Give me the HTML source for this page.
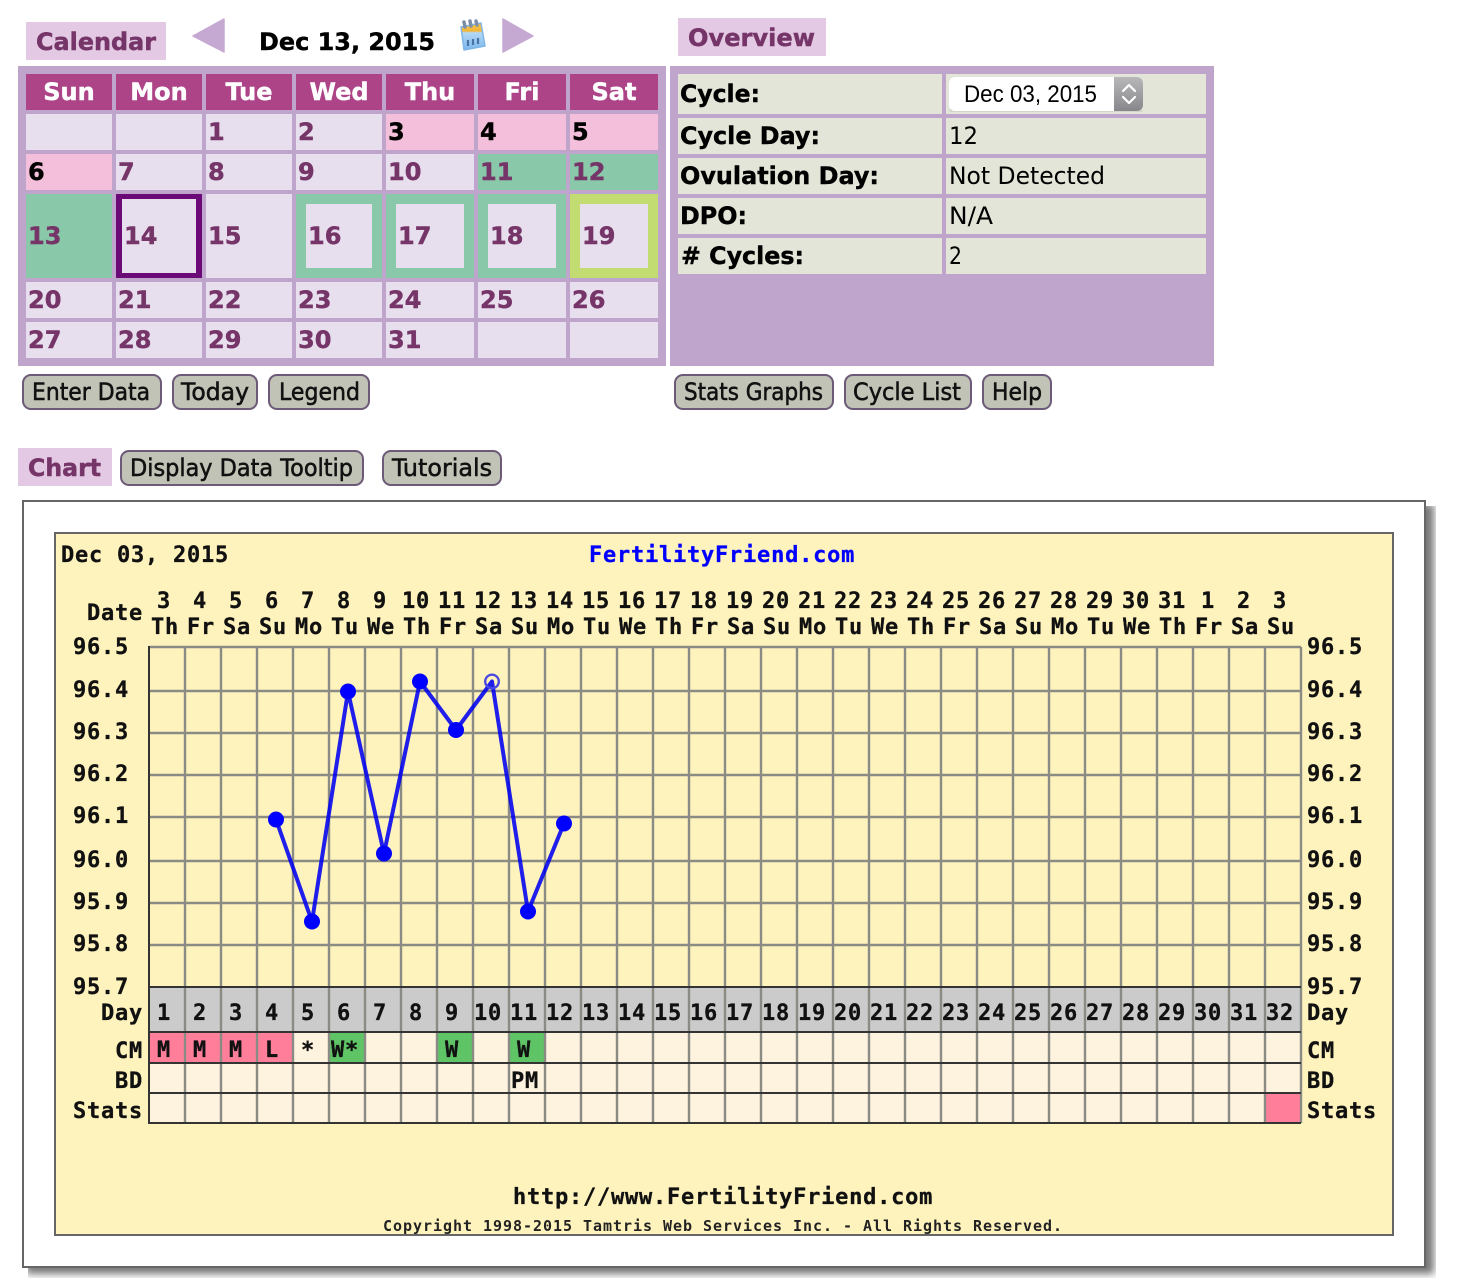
<!DOCTYPE html>
<html lang="en">
<head>
<meta charset="utf-8">
<title>Fertility Calendar and Chart</title>
<style>
html,body{margin:0;padding:0;background:#fff;width:1460px;height:1280px;overflow:hidden}
svg{display:block}
text{white-space:pre}
.b{font:bold 24px "DejaVu Sans",sans-serif}
.n{font:24px "DejaVu Sans",sans-serif}
.p{fill:#763568;stroke:#763568;stroke-width:.45px}
.k{fill:#000}
.b.k,.b .k{stroke:#000;stroke-width:.4px}
.w{fill:#fff;stroke:#fff;stroke-width:.45px}
.btn{font:24px "DejaVu Sans",sans-serif;fill:#111;stroke:#111;stroke-width:.55px}
.m{font:bold 22px "DejaVu Sans Mono","Liberation Mono",monospace;letter-spacing:.76px;fill:#111;stroke:#111;stroke-width:.3px}
.m2{font:bold 15px "DejaVu Sans Mono","Liberation Mono",monospace;letter-spacing:.97px;fill:#222}
.c text{text-anchor:middle}
</style>
</head>
<body>
<svg width="1460" height="1280" viewBox="0 0 1460 1280" xmlns="http://www.w3.org/2000/svg">
<defs>
<linearGradient id="st" x1="0" y1="0" x2="0" y2="1"><stop offset="0" stop-color="#b8b8bb"/><stop offset="1" stop-color="#87878b"/></linearGradient>
<linearGradient id="ic" x1="0" y1="0" x2="0" y2="1"><stop offset="0" stop-color="#f5c545"/><stop offset=".3" stop-color="#f2b53a"/><stop offset=".36" stop-color="#b4d8f5"/><stop offset="1" stop-color="#7ab8ee"/></linearGradient>
<filter id="bl" x="-5%" y="-5%" width="110%" height="110%"><feGaussianBlur stdDeviation="4"/></filter>
<clipPath id="sc"><rect x="28" y="506" width="1408" height="772"/></clipPath>
</defs>

<!-- Calendar heading -->
<rect x="26" y="22" width="140" height="38" fill="#e3c9e3"/>
<text class="b p" x="36" y="50" textLength="120" lengthAdjust="spacingAndGlyphs">Calendar</text>
<path d="M224 19 L193 36 L224 52 Z" fill="#c6a9d3" stroke="#c6a9d3" stroke-width="1.5" stroke-linejoin="round"/>
<text class="b k" x="259" y="50" textLength="176" lengthAdjust="spacingAndGlyphs">Dec 13, 2015</text>
<g>
<path d="M461 27 L481 23 L485 46 L464 50 Z" fill="url(#ic)" stroke="#7fb6e6" stroke-width="1.5" stroke-linejoin="round"/>
<path d="M465 27 L464 22 M471 26 L470 21 M477 25 L476 21" stroke="#7c8fa8" stroke-width="3.5" stroke-linecap="round"/>
<path d="M468 40 v6 M473 39 v6 M478 38 v6" stroke="#4a74a8" stroke-width="2.2"/>
</g>
<path d="M503 19 L533 36 L503 52 Z" fill="#c6a9d3" stroke="#c6a9d3" stroke-width="1.5" stroke-linejoin="round"/>

<!-- Calendar panel -->
<rect x="18" y="66" width="648" height="300" fill="#bfa5cb"/>
<g fill="#ae4488">
<rect x="26" y="74" width="86" height="36"/><rect x="116" y="74" width="86" height="36"/><rect x="206" y="74" width="86" height="36"/><rect x="296" y="74" width="86" height="36"/><rect x="386" y="74" width="88" height="36"/><rect x="478" y="74" width="88" height="36"/><rect x="570" y="74" width="88" height="36"/>
</g>
<g class="c">
<text class="b w" x="69" y="100">Sun</text>
<text class="b w" x="159" y="100">Mon</text>
<text class="b w" x="249" y="100">Tue</text>
<text class="b w" x="339" y="100">Wed</text>
<text class="b w" x="430" y="100">Thu</text>
<text class="b w" x="522" y="100">Fri</text>
<text class="b w" x="614" y="100">Sat</text>
</g>
<g fill="#e8dfee">
<rect x="26" y="114" width="86" height="36"/><rect x="116" y="114" width="86" height="36"/><rect x="206" y="114" width="86" height="36"/><rect x="296" y="114" width="86" height="36"/>
<rect x="116" y="154" width="86" height="36"/><rect x="206" y="154" width="86" height="36"/><rect x="296" y="154" width="86" height="36"/><rect x="386" y="154" width="88" height="36"/>
<rect x="206" y="194" width="86" height="84"/>
<rect x="26" y="282" width="86" height="36"/><rect x="116" y="282" width="86" height="36"/><rect x="206" y="282" width="86" height="36"/><rect x="296" y="282" width="86" height="36"/><rect x="386" y="282" width="88" height="36"/><rect x="478" y="282" width="88" height="36"/><rect x="570" y="282" width="88" height="36"/>
<rect x="26" y="322" width="86" height="36"/><rect x="116" y="322" width="86" height="36"/><rect x="206" y="322" width="86" height="36"/><rect x="296" y="322" width="86" height="36"/><rect x="386" y="322" width="88" height="36"/><rect x="478" y="322" width="88" height="36"/><rect x="570" y="322" width="88" height="36"/>
</g>
<g fill="#f3bfdb">
<rect x="386" y="114" width="88" height="36"/><rect x="478" y="114" width="88" height="36"/><rect x="570" y="114" width="88" height="36"/><rect x="26" y="154" width="86" height="36"/>
</g>
<g fill="#8ac8aa">
<rect x="478" y="154" width="88" height="36"/><rect x="570" y="154" width="88" height="36"/><rect x="26" y="194" width="86" height="84"/>
<rect x="296" y="194" width="86" height="84"/><rect x="386" y="194" width="88" height="84"/><rect x="478" y="194" width="88" height="84"/>
</g>
<rect x="570" y="194" width="88" height="84" fill="#c3dc71"/>
<rect x="116" y="194" width="86" height="84" fill="#6b0a76"/>
<g fill="#e8dfee">
<rect x="122" y="199" width="74" height="74"/>
<rect x="306" y="204" width="66" height="64"/><rect x="396" y="204" width="68" height="64"/><rect x="488" y="204" width="68" height="64"/><rect x="580" y="204" width="68" height="64"/>
</g>
<g class="b">
<text class="p" x="208" y="140">1</text><text class="p" x="298" y="140">2</text><text class="k" x="388" y="140">3</text><text class="k" x="480" y="140">4</text><text class="k" x="572" y="140">5</text>
<text class="k" x="28" y="180">6</text><text class="p" x="118" y="180">7</text><text class="p" x="208" y="180">8</text><text class="p" x="298" y="180">9</text><text class="p" x="388" y="180">10</text><text class="p" x="480" y="180">11</text><text class="p" x="572" y="180">12</text>
<text class="p" x="28" y="244">13</text><text class="p" x="124" y="244">14</text><text class="p" x="208" y="244">15</text><text class="p" x="308" y="244">16</text><text class="p" x="398" y="244">17</text><text class="p" x="490" y="244">18</text><text class="p" x="582" y="244">19</text>
<text class="p" x="28" y="308">20</text><text class="p" x="118" y="308">21</text><text class="p" x="208" y="308">22</text><text class="p" x="298" y="308">23</text><text class="p" x="388" y="308">24</text><text class="p" x="480" y="308">25</text><text class="p" x="572" y="308">26</text>
<text class="p" x="28" y="348">27</text><text class="p" x="118" y="348">28</text><text class="p" x="208" y="348">29</text><text class="p" x="298" y="348">30</text><text class="p" x="388" y="348">31</text>
</g>

<!-- Buttons -->
<g fill="#c0c3b6" stroke="#6d5a78" stroke-width="2">
<rect x="23" y="375" width="138" height="34" rx="8"/>
<rect x="173" y="375" width="84" height="34" rx="8"/>
<rect x="269" y="375" width="100" height="34" rx="8"/>
<rect x="675" y="375" width="158" height="34" rx="8"/>
<rect x="845" y="375" width="126" height="34" rx="8"/>
<rect x="983" y="375" width="68" height="34" rx="8"/>
<rect x="121" y="451" width="242" height="34" rx="8"/>
<rect x="383" y="451" width="118" height="34" rx="8"/>
</g>
<text class="btn" x="32" y="400" textLength="118" lengthAdjust="spacingAndGlyphs">Enter Data</text>
<text class="btn" x="181" y="400" textLength="68" lengthAdjust="spacingAndGlyphs">Today</text>
<text class="btn" x="279" y="400" textLength="81" lengthAdjust="spacingAndGlyphs">Legend</text>
<text class="btn" x="684" y="400" textLength="139" lengthAdjust="spacingAndGlyphs">Stats Graphs</text>
<text class="btn" x="853" y="400" textLength="108" lengthAdjust="spacingAndGlyphs">Cycle List</text>
<text class="btn" x="992" y="400" textLength="50" lengthAdjust="spacingAndGlyphs">Help</text>

<!-- Overview -->
<rect x="678" y="18" width="148" height="38" fill="#e3c9e3"/>
<text class="b p" x="688" y="46" textLength="127" lengthAdjust="spacingAndGlyphs">Overview</text>
<rect x="670" y="66" width="544" height="300" fill="#bfa5cb"/>
<g fill="#e2e5d7">
<rect x="678" y="74" width="264" height="40"/><rect x="946" y="74" width="260" height="40"/>
<rect x="678" y="118" width="264" height="36"/><rect x="946" y="118" width="260" height="36"/>
<rect x="678" y="158" width="264" height="36"/><rect x="946" y="158" width="260" height="36"/>
<rect x="678" y="198" width="264" height="36"/><rect x="946" y="198" width="260" height="36"/>
<rect x="678" y="238" width="264" height="36"/><rect x="946" y="238" width="260" height="36"/>
</g>
<g class="b k">
<text x="680" y="102" textLength="80" lengthAdjust="spacingAndGlyphs">Cycle:</text>
<text x="680" y="144" textLength="140" lengthAdjust="spacingAndGlyphs">Cycle Day:</text>
<text x="680" y="184" textLength="199" lengthAdjust="spacingAndGlyphs">Ovulation Day:</text>
<text x="680" y="224" textLength="67" lengthAdjust="spacingAndGlyphs">DPO:</text>
<text x="681" y="264" textLength="123" lengthAdjust="spacingAndGlyphs"># Cycles:</text>
</g>
<g class="n k">
<text x="949" y="144" textLength="29" lengthAdjust="spacingAndGlyphs">12</text>
<text x="949" y="184" textLength="156" lengthAdjust="spacingAndGlyphs">Not Detected</text>
<text x="949" y="224" textLength="44" lengthAdjust="spacingAndGlyphs">N/A</text>
<text x="949" y="264" textLength="13" lengthAdjust="spacingAndGlyphs">2</text>
</g>
<!-- Select -->
<rect x="949.5" y="109" width="193" height="3" rx="1.5" fill="#d2d5c8"/>
<rect x="949" y="77" width="194" height="34" rx="6" fill="#fff"/>
<path d="M1114 77 H1137 a6 6 0 0 1 6 6 V105 a6 6 0 0 1 -6 6 H1114 Z" fill="url(#st)"/>
<path d="M1123 91 L1129 85 L1135 91 M1123 97 L1129 103 L1135 97" fill="none" stroke="#fff" stroke-width="2.2" stroke-linecap="round" stroke-linejoin="round"/>
<text x="964" y="102" font-family="'Liberation Sans',sans-serif" font-size="24" fill="#000" textLength="133" lengthAdjust="spacingAndGlyphs">Dec 03, 2015</text>

<!-- Chart heading -->
<rect x="18" y="448" width="94" height="38" fill="#e3c9e3"/>
<text class="b p" x="28" y="476" textLength="73" lengthAdjust="spacingAndGlyphs">Chart</text>
<text class="btn" x="130" y="476" textLength="223" lengthAdjust="spacingAndGlyphs">Display Data Tooltip</text>
<text class="btn" x="392" y="476" textLength="100" lengthAdjust="spacingAndGlyphs">Tutorials</text>

<!-- Chart box -->
<g clip-path="url(#sc)"><rect x="26" y="504" width="1408" height="770" fill="#777" filter="url(#bl)"/></g>
<rect x="23" y="501" width="1402" height="766" fill="#fff" stroke="#666" stroke-width="2"/>
<rect x="55" y="533" width="1338" height="702" fill="#fef3bd" stroke="#666" stroke-width="2"/>

<text class="m" x="61" y="562">Dec 03, 2015</text>
<text class="m" x="589" y="562" style="fill:#0000ff;stroke:#0000ff">FertilityFriend.com</text>

<!-- Table fills -->
<rect x="149" y="987" width="1152" height="45" fill="#cbcbcb"/>
<rect x="149" y="1032" width="1152" height="91" fill="#fdf3df"/>
<rect x="149" y="1033" width="144" height="29" fill="#ff7f9a"/>
<rect x="329" y="1033" width="36" height="29" fill="#5fc466"/>
<rect x="437" y="1033" width="36" height="29" fill="#5fc466"/>
<rect x="509" y="1033" width="36" height="29" fill="#5fc466"/>
<rect x="1265" y="1093" width="36" height="30" fill="#ff7f9a"/>

<!-- Grid -->
<path stroke="#8b8b85" stroke-width="2.4" fill="none" d="M185 647V1123M221 647V1123M257 647V1123M293 647V1123M329 647V1123M365 647V1123M401 647V1123M437 647V1123M473 647V1123M509 647V1123M545 647V1123M581 647V1123M617 647V1123M653 647V1123M689 647V1123M725 647V1123M761 647V1123M797 647V1123M833 647V1123M869 647V1123M905 647V1123M941 647V1123M977 647V1123M1013 647V1123M1049 647V1123M1085 647V1123M1121 647V1123M1157 647V1123M1193 647V1123M1229 647V1123M1265 647V1123M1301 647V1123M149 647H1301M149 691H1301M149 733H1301M149 775H1301M149 817H1301M149 861H1301M149 903H1301M149 945H1301"/>
<path stroke="#333" stroke-width="2" fill="none" d="M149 646V1124M149 987H1301M149 1032H1301M149 1063H1301M149 1093H1301M149 1123H1301"/>

<!-- Data line -->
<polyline points="276,819.5 312,921.5 348,691.5 384,853.5 420,681.5 456,730 492,681.5 528,911.5 564,823.5" fill="none" stroke="#0000f0" stroke-width="4" stroke-linejoin="round" opacity=".88"/>
<g fill="#0000ff">
<circle cx="276" cy="819.5" r="8"/><circle cx="312" cy="921.5" r="8"/><circle cx="348" cy="691.5" r="8"/><circle cx="384" cy="853.5" r="8"/><circle cx="420" cy="681.5" r="8"/><circle cx="456" cy="730" r="8"/><circle cx="528" cy="911.5" r="8"/><circle cx="564" cy="823.5" r="8"/>
</g>
<circle cx="492" cy="681.5" r="6.8" fill="none" stroke="#4a4ae0" stroke-width="2.4"/>

<!-- Date header -->
<text class="m" x="87" y="620">Date</text>
<g class="c">
<text class="m" x="164" y="608">3</text><text class="m" x="200" y="608">4</text><text class="m" x="236" y="608">5</text><text class="m" x="272" y="608">6</text><text class="m" x="308" y="608">7</text><text class="m" x="344" y="608">8</text><text class="m" x="380" y="608">9</text><text class="m" x="416" y="608">10</text><text class="m" x="452" y="608">11</text><text class="m" x="488" y="608">12</text><text class="m" x="524" y="608">13</text><text class="m" x="560" y="608">14</text><text class="m" x="596" y="608">15</text><text class="m" x="632" y="608">16</text><text class="m" x="668" y="608">17</text><text class="m" x="704" y="608">18</text><text class="m" x="740" y="608">19</text><text class="m" x="776" y="608">20</text><text class="m" x="812" y="608">21</text><text class="m" x="848" y="608">22</text><text class="m" x="884" y="608">23</text><text class="m" x="920" y="608">24</text><text class="m" x="956" y="608">25</text><text class="m" x="992" y="608">26</text><text class="m" x="1028" y="608">27</text><text class="m" x="1064" y="608">28</text><text class="m" x="1100" y="608">29</text><text class="m" x="1136" y="608">30</text><text class="m" x="1172" y="608">31</text><text class="m" x="1208" y="608">1</text><text class="m" x="1244" y="608">2</text><text class="m" x="1280" y="608">3</text>
<text class="m" x="165" y="634">Th</text><text class="m" x="201" y="634">Fr</text><text class="m" x="237" y="634">Sa</text><text class="m" x="273" y="634">Su</text><text class="m" x="309" y="634">Mo</text><text class="m" x="345" y="634">Tu</text><text class="m" x="381" y="634">We</text><text class="m" x="417" y="634">Th</text><text class="m" x="453" y="634">Fr</text><text class="m" x="489" y="634">Sa</text><text class="m" x="525" y="634">Su</text><text class="m" x="561" y="634">Mo</text><text class="m" x="597" y="634">Tu</text><text class="m" x="633" y="634">We</text><text class="m" x="669" y="634">Th</text><text class="m" x="705" y="634">Fr</text><text class="m" x="741" y="634">Sa</text><text class="m" x="777" y="634">Su</text><text class="m" x="813" y="634">Mo</text><text class="m" x="849" y="634">Tu</text><text class="m" x="885" y="634">We</text><text class="m" x="921" y="634">Th</text><text class="m" x="957" y="634">Fr</text><text class="m" x="993" y="634">Sa</text><text class="m" x="1029" y="634">Su</text><text class="m" x="1065" y="634">Mo</text><text class="m" x="1101" y="634">Tu</text><text class="m" x="1137" y="634">We</text><text class="m" x="1173" y="634">Th</text><text class="m" x="1209" y="634">Fr</text><text class="m" x="1245" y="634">Sa</text><text class="m" x="1281" y="634">Su</text>
<text class="m" x="164" y="1020">1</text><text class="m" x="200" y="1020">2</text><text class="m" x="236" y="1020">3</text><text class="m" x="272" y="1020">4</text><text class="m" x="308" y="1020">5</text><text class="m" x="344" y="1020">6</text><text class="m" x="380" y="1020">7</text><text class="m" x="416" y="1020">8</text><text class="m" x="452" y="1020">9</text><text class="m" x="488" y="1020">10</text><text class="m" x="524" y="1020">11</text><text class="m" x="560" y="1020">12</text><text class="m" x="596" y="1020">13</text><text class="m" x="632" y="1020">14</text><text class="m" x="668" y="1020">15</text><text class="m" x="704" y="1020">16</text><text class="m" x="740" y="1020">17</text><text class="m" x="776" y="1020">18</text><text class="m" x="812" y="1020">19</text><text class="m" x="848" y="1020">20</text><text class="m" x="884" y="1020">21</text><text class="m" x="920" y="1020">22</text><text class="m" x="956" y="1020">23</text><text class="m" x="992" y="1020">24</text><text class="m" x="1028" y="1020">25</text><text class="m" x="1064" y="1020">26</text><text class="m" x="1100" y="1020">27</text><text class="m" x="1136" y="1020">28</text><text class="m" x="1172" y="1020">29</text><text class="m" x="1208" y="1020">30</text><text class="m" x="1244" y="1020">31</text><text class="m" x="1280" y="1020">32</text>
<text class="m" x="164" y="1057">M</text><text class="m" x="200" y="1057">M</text><text class="m" x="236" y="1057">M</text><text class="m" x="272" y="1057">L</text><text class="m" x="308" y="1057">*</text><text class="m" x="345" y="1057">W*</text><text class="m" x="452" y="1057">W</text><text class="m" x="524" y="1057">W</text>
<text class="m" x="525" y="1088">PM</text>
</g>

<!-- Axis labels -->
<g>
<text class="m" x="73" y="654">96.5</text><text class="m" x="73" y="697">96.4</text><text class="m" x="73" y="739">96.3</text><text class="m" x="73" y="781">96.2</text><text class="m" x="73" y="823">96.1</text><text class="m" x="73" y="867">96.0</text><text class="m" x="73" y="909">95.9</text><text class="m" x="73" y="951">95.8</text><text class="m" x="73" y="994">95.7</text>
<text class="m" x="1307" y="654">96.5</text><text class="m" x="1307" y="697">96.4</text><text class="m" x="1307" y="739">96.3</text><text class="m" x="1307" y="781">96.2</text><text class="m" x="1307" y="823">96.1</text><text class="m" x="1307" y="867">96.0</text><text class="m" x="1307" y="909">95.9</text><text class="m" x="1307" y="951">95.8</text><text class="m" x="1307" y="994">95.7</text>
<text class="m" x="101" y="1020">Day</text><text class="m" x="115" y="1058">CM</text><text class="m" x="115" y="1088">BD</text><text class="m" x="73" y="1118">Stats</text>
<text class="m" x="1307" y="1020">Day</text><text class="m" x="1307" y="1058">CM</text><text class="m" x="1307" y="1088">BD</text><text class="m" x="1307" y="1118">Stats</text>
</g>

<text class="m" x="513" y="1204">http://www.FertilityFriend.com</text>
<text class="m2" x="383" y="1231">Copyright 1998-2015 Tamtris Web Services Inc. - All Rights Reserved.</text>
</svg>
</body>
</html>
